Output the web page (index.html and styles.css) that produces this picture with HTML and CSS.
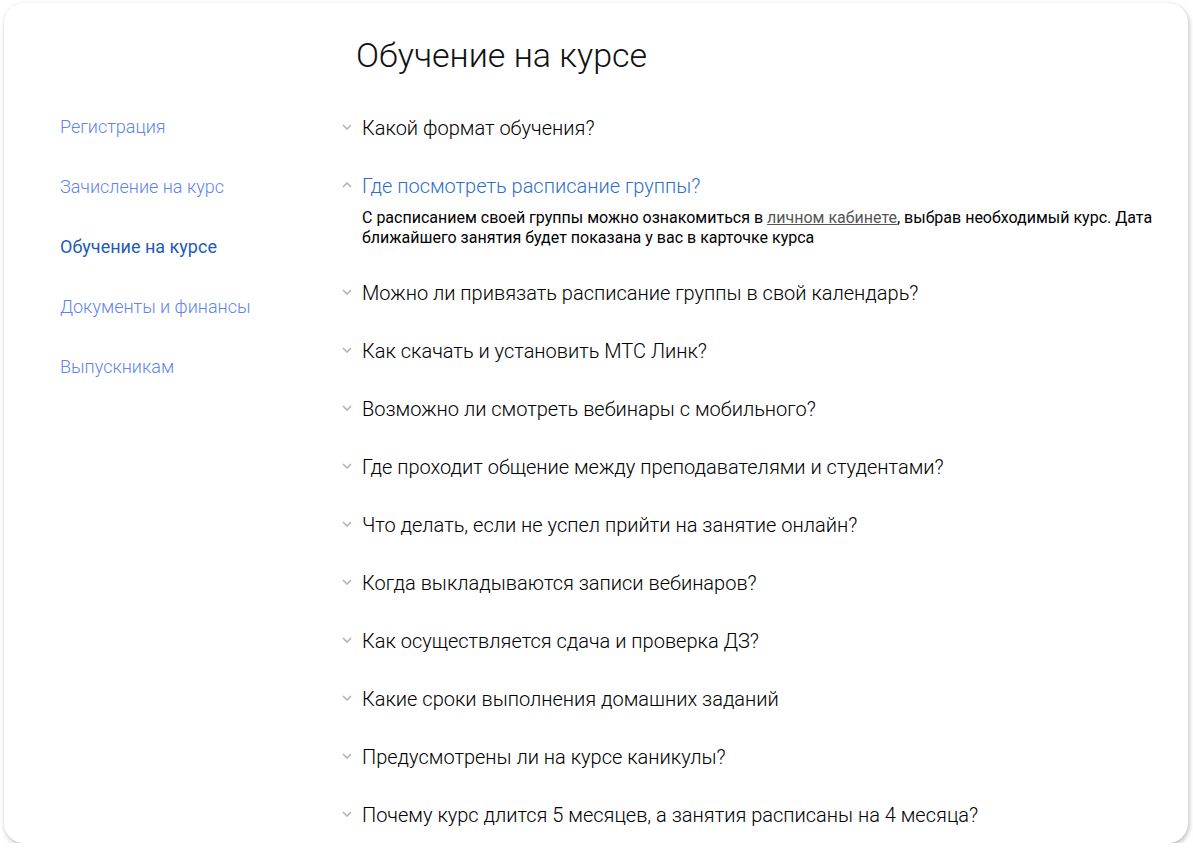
FILE: index.html
```html
<!DOCTYPE html>
<html lang="ru">
<head>
    <meta charset="UTF-8">
    <title>Обучение на курсе</title>
    <meta name="viewport" content="width=device-width,initial-scale=1">
    <link rel="stylesheet" href="styles.css">
</head>
<body>

<div class="card">
    <ul class="side"><!--разделы-->
        <li><a href="#">Регистрация</a></li>
        <li><a href="#">Зачисление на курс</a></li>
        <li class="active"><a href="#">Обучение на курсе</a></li>
        <li><a href="#">Документы и финансы</a></li>
        <li><a href="#">Выпускникам</a></li>
    </ul>

    <div class="main">
        <h1 class="title">Обучение на курсе</h1>
        <ul class="faq"><!--вопросы-->
            <li class="q">
                <div class="head"><svg class="chev" viewBox="0 0 10 6"><polyline points="1,1 5,5 9,1"/></svg>Какой формат обучения?</div>
            </li>
            <li class="q open">
                <div class="head"><svg class="chev" viewBox="0 0 10 6"><polyline points="1,5 5,1 9,5"/></svg>Где посмотреть расписание группы?</div>
                <p class="answer">С расписанием своей группы можно ознакомиться в <a href="#">личном кабинете</a>, выбрав необходимый курс. Дата ближайшего занятия будет показана у вас в карточке курса</p>
            </li>
            <li class="q">
                <div class="head"><svg class="chev" viewBox="0 0 10 6"><polyline points="1,1 5,5 9,1"/></svg>Можно ли привязать расписание группы в свой календарь?</div>
            </li>
            <li class="q">
                <div class="head"><svg class="chev" viewBox="0 0 10 6"><polyline points="1,1 5,5 9,1"/></svg>Как скачать и установить МТС Линк?</div>
            </li>
            <li class="q">
                <div class="head"><svg class="chev" viewBox="0 0 10 6"><polyline points="1,1 5,5 9,1"/></svg>Возможно ли смотреть вебинары с мобильного?</div>
            </li>
            <li class="q">
                <div class="head"><svg class="chev" viewBox="0 0 10 6"><polyline points="1,1 5,5 9,1"/></svg>Где проходит общение между преподавателями и студентами?</div>
            </li>
            <li class="q">
                <div class="head"><svg class="chev" viewBox="0 0 10 6"><polyline points="1,1 5,5 9,1"/></svg>Что делать, если не успел прийти на занятие онлайн?</div>
            </li>
            <li class="q">
                <div class="head"><svg class="chev" viewBox="0 0 10 6"><polyline points="1,1 5,5 9,1"/></svg>Когда выкладываются записи вебинаров?</div>
            </li>
            <li class="q">
                <div class="head"><svg class="chev" viewBox="0 0 10 6"><polyline points="1,1 5,5 9,1"/></svg>Как осуществляется сдача и проверка ДЗ?</div>
            </li>
            <li class="q">
                <div class="head"><svg class="chev" viewBox="0 0 10 6"><polyline points="1,1 5,5 9,1"/></svg>Какие сроки выполнения домашних заданий</div>
            </li>
            <li class="q">
                <div class="head"><svg class="chev" viewBox="0 0 10 6"><polyline points="1,1 5,5 9,1"/></svg>Предусмотрены ли на курсе каникулы?</div>
            </li>
            <li class="q">
                <div class="head"><svg class="chev" viewBox="0 0 10 6"><polyline points="1,1 5,5 9,1"/></svg>Почему курс длится 5 месяцев, а занятия расписаны на 4 месяца?</div>
            </li>
        </ul>
    </div>
</div>

</body>
</html>
```

FILE: styles.css
```css
body{
    margin: 0;
    background: #fff;
    font-family: Roboto, "Noto Sans", Arial, sans-serif;
    color: #111;
}
ul{
    margin: 0;
    padding: 0;
    list-style: none;
}
a{
    text-decoration: none;
}

.card{
    margin: 3px 5px 0 4px;
    height: 840px;
    box-sizing: border-box;
    padding: 31px 28px 0 56px;
    background: #fff;
    border-radius: 20px;
    box-shadow: 1px 2px 5px 0 rgba(0,0,0,0.28);
    display: flex;
    overflow: hidden;
}

.side{
    width: 282px;
    flex: none;
    padding-top: 63px;
}
.side li{
    padding: 18px 0;
    font-size: 18px;
    line-height: 24px;
    font-weight: 300;
}
.side a{
    color: #5f83f0;
}
.side li.active{
    font-weight: 400;
}
.side li.active a{
    color: #1d5cb6;
}

.main{
    flex: 1;
    min-width: 0;
}
.title{
    margin: 0 0 23px 14px;
    font-size: 34px;
    line-height: 42px;
    font-weight: 300;
    color: #111;
}

.q{
    padding: 17px 0;
}
.q.open{
    padding-bottom: 16px;
}
.head{
    display: flex;
    align-items: center;
    gap: 10px;
    font-size: 20px;
    line-height: 24px;
    font-weight: 300;
    color: #000;
}
.chev{
    width: 10px;
    height: 6px;
    margin-top: -3px;
    flex: none;
    fill: none;
    stroke: #b3b3b3;
    stroke-width: 1.6;
}
.q.open .head{
    color: #2f6fca;
}
.answer{
    margin: 10px 0 0 20px;
    font-size: 16px;
    line-height: 20px;
    color: #000;
}
.answer a{
    color: #555;
    text-decoration: underline;
}
```
